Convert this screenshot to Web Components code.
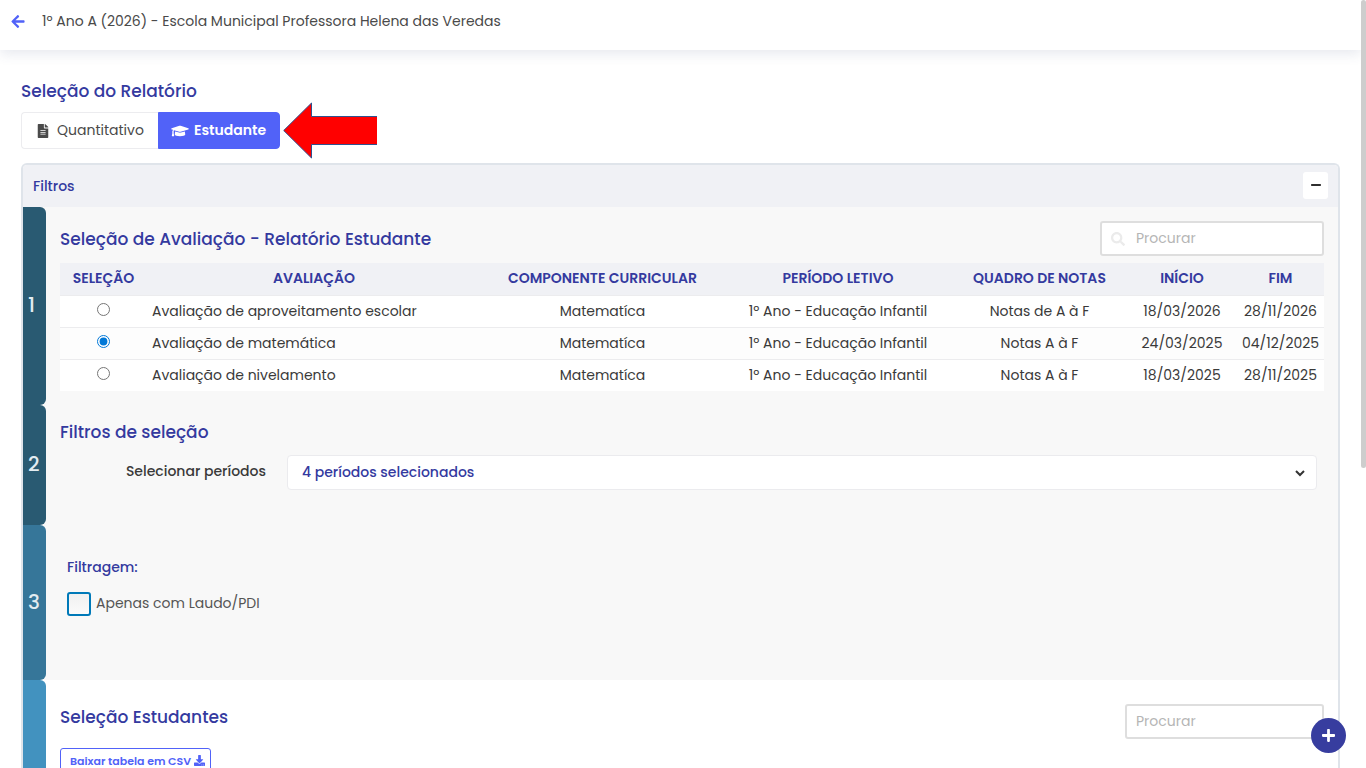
<!DOCTYPE html>
<html lang="pt-BR">
<head>
<meta charset="UTF-8">
<meta name="viewport" content="width=device-width, initial-scale=1">
<title>Seleção do Relatório</title>
<style>

  :root{
    --primary:#5162F8;
    --title:#343A9F;
    --text:#3A3A3A;
    --surface:#F0F1F5;
    --line:#DFE4EA;
  }

  body{
    margin:0;
    background:#fff;
    color:var(--text);
    font-family:Poppins, Inter, "Open Sans", sans-serif;
    font-size:14px;
    line-height:20px;
  }

</style>
</head>
<body>

<report-page>
  <page-header slot="header">1º Ano A (2026) - Escola Municipal Professora Helena das Veredas</page-header>

  <report-tabs>Seleção do Relatório</report-tabs>

  <filter-panel>
    <span slot="title">Filtros</span>

    <step-section number="1" size="198" color="#295A72">
      <section-head search icon>Seleção de Avaliação - Relatório Estudante</section-head>
      <evaluation-table></evaluation-table>
    </step-section>

    <step-section number="2" size="120" color="#295A72">
      <section-head>Filtros de seleção</section-head>
      <period-select>Selecionar períodos</period-select>
    </step-section>

    <step-section number="3" size="155" color="#367699">
      <report-filter>
        <span slot="title">Filtragem:</span>
        Apenas com Laudo/PDI
      </report-filter>
    </step-section>

    <step-section size="500" color="#4292BF" plain>
      <section-head search>Seleção Estudantes</section-head>
      <download-button>Baixar tabela em CSV</download-button>
    </step-section>
  </filter-panel>

  <add-button slot="floating"></add-button>
</report-page>

<script>

const ICONS = {
  back: ["0 0 448 512", "M257.5 445.1l-22.2 22.2c-9.4 9.4-24.6 9.4-33.9 0L7 273c-9.4-9.4-9.4-24.6 0-33.9L201.4 44.7c9.4-9.4 24.6-9.4 33.9 0l22.2 22.2c9.5 9.5 9.3 25-.4 34.3L136.6 216H424c13.3 0 24 10.7 24 24v32c0 13.3-10.7 24-24 24H136.6l120.5 114.8c9.8 9.3 10 24.8.4 34.3z"],
  file: ["0 0 384 512", "M224 136V0H24C10.7 0 0 10.7 0 24v464c0 13.3 10.7 24 24 24h336c13.3 0 24-10.7 24-24V160H248c-13.2 0-24-10.8-24-24zm64 236c0 6.600-5.400 12-12 12H108c-6.600 0-12-5.400-12-12v-8c0-6.600 5.400-12 12-12h168c6.600 0 12 5.400 12 12v8zm0-64c0 6.600-5.400 12-12 12H108c-6.600 0-12-5.400-12-12v-8c0-6.600 5.400-12 12-12h168c6.600 0 12 5.400 12 12v8zm0-72v8c0 6.600-5.400 12-12 12H108c-6.600 0-12-5.400-12-12v-8c0-6.600 5.400-12 12-12h168c6.600 0 12 5.400 12 12zm96-114.100v6.100H256V0h6.100c6.400 0 12.500 2.500 17 7l97.900 98c4.500 4.500 7 10.600 7 16.900z"],
  cap: ["0 0 640 512", "M622.34 153.2L343.4 67.5c-15.2-4.67-31.6-4.67-46.79 0L17.66 153.2c-23.54 7.23-23.54 38.36 0 45.59l48.63 14.94c-10.67 13.19-17.23 29.28-17.88 46.9C38.78 266.15 32 276.11 32 288c0 10.78 5.68 19.85 13.86 25.65L20.33 428.53C18.11 438.52 25.71 448 35.94 448h56.11c10.24 0 17.84-9.48 15.62-19.47L82.14 313.65C90.32 307.85 96 298.78 96 288c0-11.57-6.47-21.25-15.66-26.87.76-15.02 8.44-28.3 20.69-36.72L296.6 284.5c9.06 2.78 26.44 6.25 46.79 0l278.95-85.7c23.55-7.24 23.55-38.36 0-45.6zM352.79 315.09c-28.53 8.76-52.84 3.92-65.59 0l-145.02-44.55L128 384c0 35.35 85.96 64 192 64s192-28.65 192-64l-14.18-113.47-145.03 44.56z"],
  search: ["0 0 512 512", "M505 442.7L405.3 343c-4.5-4.5-10.6-7-17-7H372c27.6-35.3 44-79.7 44-128C416 93.1 322.9 0 208 0S0 93.1 0 208s93.1 208 208 208c48.3 0 92.7-16.4 128-44v16.3c0 6.4 2.5 12.5 7 17l99.7 99.7c9.4 9.4 24.6 9.4 33.9 0l28.3-28.3c9.4-9.4 9.4-24.6.1-34zM208 336c-70.7 0-128-57.2-128-128 0-70.7 57.2-128 128-128 70.7 0 128 57.2 128 128 0 70.7-57.2 128-128 128z"],
  minus: ["0 0 448 512", "M416 208H32c-17.670 0-32 14.330-32 32v32c0 17.670 14.330 32 32 32h384c17.670 0 32-14.330 32-32v-32c0-17.670-14.330-32-32-32z"],
  plus: ["0 0 448 512", "M416 208H272V64c0-17.670-14.330-32-32-32h-32c-17.670 0-32 14.330-32 32v144H32c-17.670 0-32 14.330-32 32v32c0 17.670 14.330 32 32 32h144v144c0 17.670 14.330 32 32 32h32c17.670 0 32-14.330 32-32V304h144c17.670 0 32-14.330 32-32v-32c0-17.670-14.330-32-32-32z"],
  download: ["0 0 512 512", "M216 0h80c13.3 0 24 10.7 24 24v168h87.7c17.8 0 26.7 21.5 14.1 34.1L269.7 378.3c-7.5 7.5-19.8 7.5-27.3 0L90.1 226.1c-12.6-12.6-3.7-34.1 14.1-34.1H192V24c0-13.3 10.7-24 24-24zm296 376v112c0 13.3-10.7 24-24 24H24c-13.3 0-24-10.7-24-24V376c0-13.3 10.7-24 24-24h146.7l49 49c20.1 20.1 52.5 20.1 72.6 0l49-49H488c13.3 0 24 10.7 24 24zm-124 88c0-11-9-20-20-20s-20 9-20 20 9 20 20 20 20-9 20-20zm64 0c0-11-9-20-20-20s-20 9-20 20 9 20 20 20 20-9 20-20z"]
};

function icon(name, width, height){
  const [box, path] = ICONS[name];
  return `<svg class="icon" aria-hidden="true" width="${width}" height="${height}" viewBox="${box}"><path fill="currentColor" d="${path}"/></svg>`;
}

// Shared by every element: attach the root and render once
class BaseElement extends HTMLElement {

  constructor(){
    super();

    this.attachShadow({ mode:"open" });
  }

  connectedCallback(){
    this.shadowRoot.innerHTML = `
      <style>
        :host{ display:block; }
        *{ box-sizing:border-box; }
        button, input, select{ font:inherit; color:inherit; margin:0; }
        button{ cursor:pointer; }
        .icon{ display:block; flex:none; }
        h2{
          margin:0;
          color:var(--title);
          font-size:17px;
          line-height:26px;
          font-weight:500;
        }
      </style>
      ${this.render()}
    `;
  }

}

class ReportPage extends BaseElement {

  render(){
    return `
      <style>

        .scroller{
          height:100vh;
          overflow-y:auto;
          scrollbar-width:none;
          padding-right:5px;
          box-sizing:border-box;
        }

        main{
          padding:28px 21px 0;
        }

        .thumb{
          position:fixed;
          top:0;
          right:0;
          width:5px;
          height:61%;
          background:#CDCDCD;
          border-radius:3px;
        }

      </style>

      <div class="scroller">
        <slot name="header"></slot>
        <main><slot></slot></main>
      </div>
      <div class="thumb"></div>
      <slot name="floating"></slot>
    `;
  }

}

class PageHeader extends BaseElement {

  render(){
    return `
      <style>

        header{
          display:flex;
          align-items:flex-start;
          gap:17px;
          height:50px;
          padding:11px 11px 0;
          background:#fff;
          box-shadow:0 4px 12px rgba(60,70,120,.12);
          color:#4A4A4A;
        }

        a{
          display:block;
          padding:3px 0;
          color:var(--primary);
        }

      </style>

      <header>
        <a href="#" aria-label="Voltar">${icon("back", 14, 15)}</a>
        <slot></slot>
      </header>
    `;
  }

}

class ReportTabs extends BaseElement {

  render(){
    return `
      <style>

        .row{
          display:flex;
          align-items:center;
          gap:3px;
          margin:8px 0 14px;
        }

        .tabs{
          display:flex;
        }

        button{
          display:flex;
          align-items:center;
          height:37px;
          padding:0 0 2px 12px;
          border:1px solid #ECECEF;
          background:#fff;
          color:#4A4A4A;
        }

        .first{
          width:137px;
          gap:8px;
          padding-left:15px;
          border-right:0;
          border-radius:4px 0 0 4px;
        }

        .active{
          width:122px;
          gap:5px;
          border-color:var(--primary);
          border-radius:0 4px 4px 0;
          background:var(--primary);
          color:#fff;
          font-weight:600;
        }

        .icon{
          margin-top:2px;
        }

        .arrow{
          display:block;
          margin:-10px 0;
        }

      </style>

      <h2><slot></slot></h2>
      <div class="row">
        <div class="tabs">
          <button class="first" type="button">${icon("file", 12, 14)}Quantitativo</button>
          <button class="active" type="button" aria-pressed="true">${icon("cap", 18, 14)}Estudante</button>
        </div>
        <svg class="arrow" width="94" height="57" viewBox="0 0 94 57" aria-hidden="true">
          <path d="M94 14.5H28.500V1L.7 28.500L28.500 56V42.500H94" fill="#FF0000" stroke="#2F528F"/>
        </svg>
      </div>
    `;
  }

}

class FilterPanel extends BaseElement {

  render(){
    return `
      <style>

        .panel{
          border:2px solid var(--line);
          border-bottom:0;
          border-radius:6px 6px 0 0;
          overflow:hidden;
        }

        .head{
          display:flex;
          align-items:center;
          justify-content:space-between;
          height:42px;
          padding:0 10px;
          background:var(--surface);
          color:var(--title);
          font-weight:500;
        }

        button{
          display:grid;
          place-items:center;
          width:25px;
          height:27px;
          margin-bottom:2px;
          padding:0;
          border:0;
          border-radius:3px;
          background:#fff;
          color:#2E2E2E;
        }

      </style>

      <div class="panel">
        <div class="head">
          <slot name="title"></slot>
          <button type="button" aria-label="Recolher filtros">${icon("minus", 10, 12)}</button>
        </div>
        <slot></slot>
      </div>
    `;
  }

}

class StepSection extends BaseElement {

  render(){

    const plain = this.hasAttribute("plain");

    return `
      <style>

        section{
          display:flex;
          min-height:${this.getAttribute("size")}px;
          background:${plain ? "#fff" : "#F8F8F8"};
        }

        .step{
          display:flex;
          align-items:center;
          flex:none;
          width:23px;
          padding:0 0 2px 5px;
          border-radius:0 6px 6px 0;
          background:${this.getAttribute("color")};
          color:#E3ECF1;
          font-size:20px;
          font-weight:500;
        }

        .body{
          flex:1;
          min-width:0;
          padding:${plain ? "24px" : "14px"} 14px 0;
        }

      </style>

      <section>
        <div class="step">${this.getAttribute("number") || ""}</div>
        <div class="body"><slot></slot></div>
      </section>
    `;
  }

}

class SectionHead extends BaseElement {

  render(){

    const withIcon = this.hasAttribute("icon");

    const search = `
      <label>
        ${withIcon ? icon("search", 14, 14) : ""}
        <input type="search" placeholder="Procurar" aria-label="Procurar">
      </label>
    `;

    return `
      <style>

        .head{
          display:flex;
          align-items:flex-start;
          justify-content:space-between;
        }

        h2{
          padding-top:${withIcon ? "5px" : "0"};
        }

        label{
          display:flex;
          align-items:center;
          width:${withIcon ? "224px" : "199px"};
          height:35px;
          padding:0 9px;
          gap:11px;
          border:2px solid #DEDEDE;
          border-radius:3px;
          background:#fff;
          color:#EBEBEB;
        }

        input{
          flex:1;
          min-width:0;
          padding:0 0 2px;
          border:0;
          outline:0;
          background:none;
          color:var(--text);
        }

        input::placeholder{
          color:#B5B5B5;
        }

      </style>

      <div class="head">
        <h2><slot></slot></h2>
        ${this.hasAttribute("search") ? search : ""}
      </div>
    `;
  }

}

class EvaluationTable extends BaseElement {

  render(){

    const head = ["Seleção", "Avaliação", "Componente curricular", "Período letivo", "Quadro de notas", "Início", "Fim"];

    const rows = [
      ["Avaliação de aproveitamento escolar", "Matematíca", "1º Ano - Educação Infantil", "Notas de A à F", "18/03/2026", "28/11/2026"],
      ["Avaliação de matemática", "Matematíca", "1º Ano - Educação Infantil", "Notas A à F", "24/03/2025", "04/12/2025"],
      ["Avaliação de nivelamento", "Matematíca", "1º Ano - Educação Infantil", "Notas A à F", "18/03/2025", "28/11/2025"]
    ];

    return `
      <style>

        table{
          width:100%;
          margin-top:7px;
          table-layout:fixed;
          border-collapse:separate;
          border-spacing:0;
          text-align:center;
        }

        th, td{
          height:32px;
          padding:0 0 2px;
          white-space:nowrap;
        }

        th{
          background:var(--surface);
          color:var(--title);
          font-weight:600;
          text-transform:uppercase;
        }

        td{
          border-top:1px solid #ECECEE;
          background:#fff;
        }

        tr:nth-child(even) td{
          background:#FDFDFD;
        }

        td:first-child{
          padding-bottom:4px;
        }

        td:nth-child(2){
          padding-left:5px;
          text-align:left;
        }

        input{
          display:block;
          width:13px;
          height:13px;
          margin:0 auto;
          accent-color:#0078D7;
        }

      </style>

      <table>
        <colgroup>
          <col style="width:87px"><col><col style="width:243px"><col style="width:228px"><col style="width:175px"><col style="width:110px"><col style="width:87px">
        </colgroup>
        <thead>
          <tr>${head.map(text => `<th scope="col">${text}</th>`).join("")}</tr>
        </thead>
        <tbody>
          ${rows.map((row, i) => `
            <tr>
              <td><input type="radio" name="evaluation" aria-label="${row[0]}" ${i === 1 ? "checked" : ""}></td>
              ${row.map(text => `<td>${text}</td>`).join("")}
            </tr>
          `).join("")}
        </tbody>
      </table>
    `;
  }

}

class PeriodSelect extends BaseElement {

  render(){
    return `
      <style>

        .field{
          display:grid;
          grid-template-columns:206px 1fr;
          align-items:center;
          gap:21px;
          padding:10px 7px 0 0;
          font-weight:500;
        }

        label{
          padding-bottom:4px;
          text-align:right;
        }

        .box{
          display:grid;
          align-items:center;
        }

        .box > *{
          grid-area:1 / 1;
        }

        select{
          appearance:none;
          width:100%;
          height:35px;
          padding:0 14px 2px;
          border:1px solid #EBEBEE;
          border-radius:4px;
          background:#fff;
          color:var(--title);
        }

        svg{
          justify-self:end;
          margin-right:12px;
          pointer-events:none;
        }

      </style>

      <div class="field">
        <label for="period"><slot></slot></label>
        <div class="box">
          <select id="period"><option>4 períodos selecionados</option></select>
          <svg width="10" height="8" viewBox="0 0 10 8" aria-hidden="true">
            <path d="M1 2L5 6L9 2" fill="none" stroke="#333" stroke-width="2"/>
          </svg>
        </div>
      </div>
    `;
  }

}

class ReportFilter extends BaseElement {

  render(){
    return `
      <style>

        .filter{
          padding:18px 7px;
        }

        .title{
          color:var(--title);
          font-weight:500;
        }

        .check{
          display:flex;
          align-items:center;
          gap:5px;
          margin-top:15px;
          color:#555;
        }

        label{
          padding-bottom:2px;
        }

        input{
          appearance:none;
          width:24px;
          height:24px;
          border:2px solid #0079B8;
          border-radius:3px;
          background:linear-gradient(#F0F0F0, #FAFAFA);
        }

        input:checked{
          background:#0079B8;
        }

      </style>

      <div class="filter">
        <div class="title"><slot name="title"></slot></div>
        <div class="check">
          <input type="checkbox" id="laudo">
          <label for="laudo"><slot></slot></label>
        </div>
      </div>
    `;
  }

}

class DownloadButton extends BaseElement {

  render(){
    return `
      <style>

        button{
          display:flex;
          align-items:center;
          gap:3px;
          height:27px;
          margin-top:9px;
          padding:0 5px 2px 9px;
          border:1px solid var(--primary);
          border-radius:3px;
          background:#fff;
          color:var(--primary);
          font-size:11px;
          font-weight:600;
        }

      </style>

      <button type="button"><slot></slot>${icon("download", 11, 11)}</button>
    `;
  }

}

class AddButton extends BaseElement {

  render(){
    return `
      <style>

        button{
          position:fixed;
          right:20px;
          bottom:15px;
          display:grid;
          place-items:center;
          width:35px;
          height:35px;
          padding:0;
          border:0;
          border-radius:50%;
          background:#373D9F;
          color:#fff;
        }

      </style>

      <button type="button" aria-label="Adicionar">${icon("plus", 13, 15)}</button>
    `;
  }

}

customElements.define("report-page", ReportPage);
customElements.define("page-header", PageHeader);
customElements.define("report-tabs", ReportTabs);
customElements.define("filter-panel", FilterPanel);
customElements.define("step-section", StepSection);
customElements.define("section-head", SectionHead);
customElements.define("evaluation-table", EvaluationTable);
customElements.define("period-select", PeriodSelect);
customElements.define("report-filter", ReportFilter);
customElements.define("download-button", DownloadButton);
customElements.define("add-button", AddButton);

</script>
</body>
</html>
